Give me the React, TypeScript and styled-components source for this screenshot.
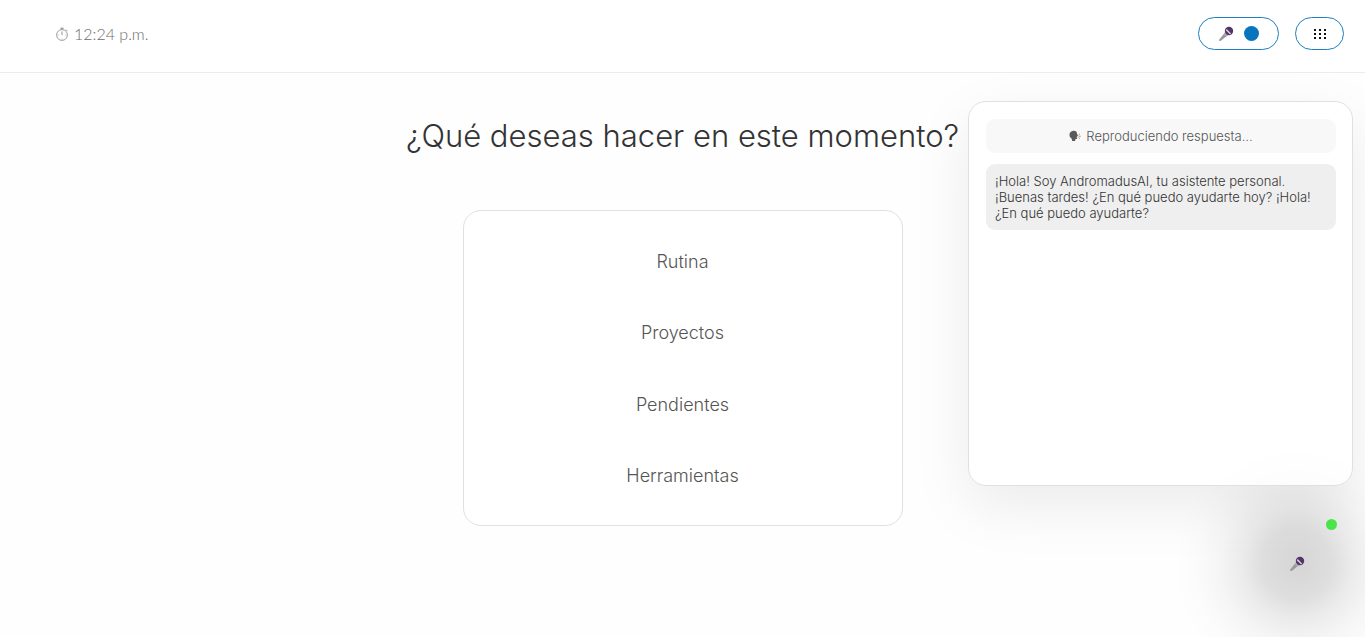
import React from "react";
import styled, { createGlobalStyle } from "styled-components";

const GlobalStyle = createGlobalStyle`
  *, *::before, *::after { box-sizing: border-box; }
  body {
    margin: 0;
    background: #fefefe;
    color: #333;
    font-family: Inter, "Noto Sans", sans-serif;
    font-weight: 300;
  }
  button { font: inherit; color: inherit; cursor: pointer; }
`;

const Page = styled.div`
  position: relative;
  min-height: 100vh;
  overflow: hidden;
`;

const Header = styled.header`
  display: flex;
  align-items: center;
  justify-content: space-between;
  padding: 17px 21px 22px 54px;
  border-bottom: 1px solid #ececec;
  background: #fff;
`;

const Clock = styled.div`
  display: flex;
  align-items: center;
  gap: 4px;
  color: #6c6c6c;
  font-family: Lato, "Noto Sans", sans-serif;
  font-size: 16px;
  font-weight: 300;
  line-height: 20px;
`;

const Actions = styled.div`
  display: flex;
  gap: 16px;
`;

const PillButton = styled.button<{ $wide?: boolean }>`
  display: flex;
  align-items: center;
  justify-content: center;
  gap: 10px;
  width: ${(p) => (p.$wide ? 81 : 49)}px;
  height: 33px;
  padding: 0;
  border: 1px solid #1f7fc0;
  border-radius: 17px;
  background: #fff;
`;

const Dot = styled.span<{ $size: number; $color: string }>`
  display: block;
  width: ${(p) => p.$size}px;
  height: ${(p) => p.$size}px;
  border-radius: 50%;
  background: ${(p) => p.$color};
`;

const Main = styled.main`
  display: flex;
  flex-direction: column;
  align-items: center;
  gap: 54px;
  padding: 43px 20px;
`;

const Title = styled.h1`
  margin: 0;
  color: #333;
  font-size: 31px;
  font-weight: 300;
  line-height: 40px;
`;

const Menu = styled.nav`
  display: grid;
  grid-auto-rows: 1fr;
  width: 100%;
  max-width: 440px;
  min-height: 316px;
  padding: 15px 14px 13px;
  border: 1px solid #e0e0e0;
  border-radius: 18px;
  background: #fff;
`;

const MenuButton = styled.button`
  border: 0;
  background: none;
  color: #555;
  font-size: 18px;
  line-height: 24px;
`;

const Panel = styled.aside`
  position: absolute;
  top: 101px;
  right: 12px;
  display: flex;
  flex-direction: column;
  gap: 11px;
  width: 385px;
  height: 385px;
  padding: 17px 16px 17px 17px;
  border: 1px solid #e0e0e0;
  border-radius: 18px;
  background: rgba(255, 255, 255, 0.7);
  box-shadow: 0 20px 60px rgba(0, 0, 0, 0.08);
`;

const Status = styled.div`
  display: flex;
  align-items: center;
  justify-content: center;
  gap: 5px;
  padding: 9px;
  border-radius: 9px;
  background: #f8f8f8;
  color: #555;
  font-size: 13px;
  line-height: 16px;
`;

const Message = styled.p`
  margin: 0;
  padding: 9px;
  border-radius: 9px;
  background: #efefef;
  color: #333;
  font-size: 13px;
  line-height: 16px;
`;

const Fab = styled.button`
  position: absolute;
  right: 33px;
  bottom: 38px;
  display: grid;
  place-items: center;
  width: 70px;
  height: 70px;
  padding: 0;
  border: 0;
  border-radius: 50%;
  background: none;

  &::before {
    content: "";
    position: absolute;
    inset: -90px;
    border-radius: 50%;
    background: radial-gradient(
      closest-side,
      rgba(0, 0, 0, 0.16) 0,
      rgba(0, 0, 0, 0.125) 35px,
      rgba(0, 0, 0, 0.075) 55px,
      rgba(0, 0, 0, 0.035) 78px,
      rgba(0, 0, 0, 0.012) 100px,
      rgba(0, 0, 0, 0) 124px
    );
    pointer-events: none;
  }

  svg { position: relative; }
`;

const Online = styled(Dot)`
  position: absolute;
  right: 28px;
  bottom: 107px;
`;

const MicIcon = () => (
  <svg width="16" height="16" viewBox="0 0 16 16" aria-hidden="true">
    <path d="M1.2 13.4 7.2 6.2l2.9 2.9-7.2 5.7c-.5.4-1 .3-1.4-.1s-.6-.9-.3-1.3z" fill="#999" />
    <path d="M7.2 6.2l2.9 2.9-1.8 1.4-2.6-2.5z" fill="#b0acae" />
    <circle cx="11" cy="5" r="4.2" fill="#523468" />
    <path d="M8.2 3.6 12.6 8" stroke="#d3ccd7" strokeWidth="1.5" />
  </svg>
);

const StopwatchIcon = () => (
  <svg width="16" height="16" viewBox="0 0 16 16" fill="none" stroke="#888" aria-hidden="true">
    <circle cx="8" cy="9" r="5.4" strokeWidth="0.8" />
    <path d="M8 5.5V9" strokeWidth="0.9" />
    <path d="M6.4 2.2h3.2M8 2.2v1.6M12 3.6l1.2 1.2" strokeWidth="1" />
    <path d="M8 12.6v.8M3.8 9h.8M11.4 9h.8" strokeWidth="0.7" />
  </svg>
);

const GridIcon = () => (
  <svg width="12" height="12" viewBox="0 0 12 12" fill="#111" shapeRendering="crispEdges" aria-hidden="true">
    {[1, 5, 9].map((y) => [0, 5, 10].map((x) => <rect key={`${x}-${y}`} x={x} y={y} width="2" height="2" />))}
  </svg>
);

const SpeakingIcon = () => (
  <svg width="12" height="12" viewBox="0 0 12 12" aria-hidden="true">
    <path
      d="M4.3.8C6.6.5 8 1.9 8.1 3.8l.8 1.7c.1.3 0 .5-.3.5l-.4.1v.8l-1.3.1 1.3.5-.1.9c-.1.6-.7.7-1.6.6l-.4 1.9H3.2l-.6-2.3C1.1 7.7.4 6.3.5 4.5.6 2.5 2.1 1 4.3.8z"
      fill="#5a5a5a"
    />
    <path d="M9.6 5.2 11 3.8M9.8 6.3h1.9M9.5 7.4l1.5 1.3" stroke="#777" strokeWidth="0.7" />
  </svg>
);

const options = ["Rutina", "Proyectos", "Pendientes", "Herramientas"];

export default function App() {
  return (
    <Page>
      <GlobalStyle />
      <Header>
        <Clock>
          <StopwatchIcon />
          <time>12:24 p.m.</time>
        </Clock>
        <Actions>
          <PillButton type="button" aria-label="Micrófono" $wide>
            <MicIcon />
            <Dot $size={15} $color="#0874be" />
          </PillButton>
          <PillButton type="button" aria-label="Aplicaciones">
            <GridIcon />
          </PillButton>
        </Actions>
      </Header>
      <Main>
        <Title>¿Qué deseas hacer en este momento?</Title>
        <Menu>
          {options.map((option) => (
            <MenuButton type="button" key={option}>
              {option}
            </MenuButton>
          ))}
        </Menu>
      </Main>
      <Fab type="button" aria-label="Hablar con el asistente">
        <MicIcon />
      </Fab>
      <Online $size={11} $color="#4be84b" />
      <Panel>
        <Status role="status">
          <SpeakingIcon />
          <span>Reproduciendo respuesta...</span>
        </Status>
        <Message>
          ¡Hola! Soy AndromadusAI, tu asistente personal. ¡Buenas tardes! ¿En qué puedo ayudarte hoy? ¡Hola! ¿En qué
          puedo ayudarte?
        </Message>
      </Panel>
    </Page>
  );
}
